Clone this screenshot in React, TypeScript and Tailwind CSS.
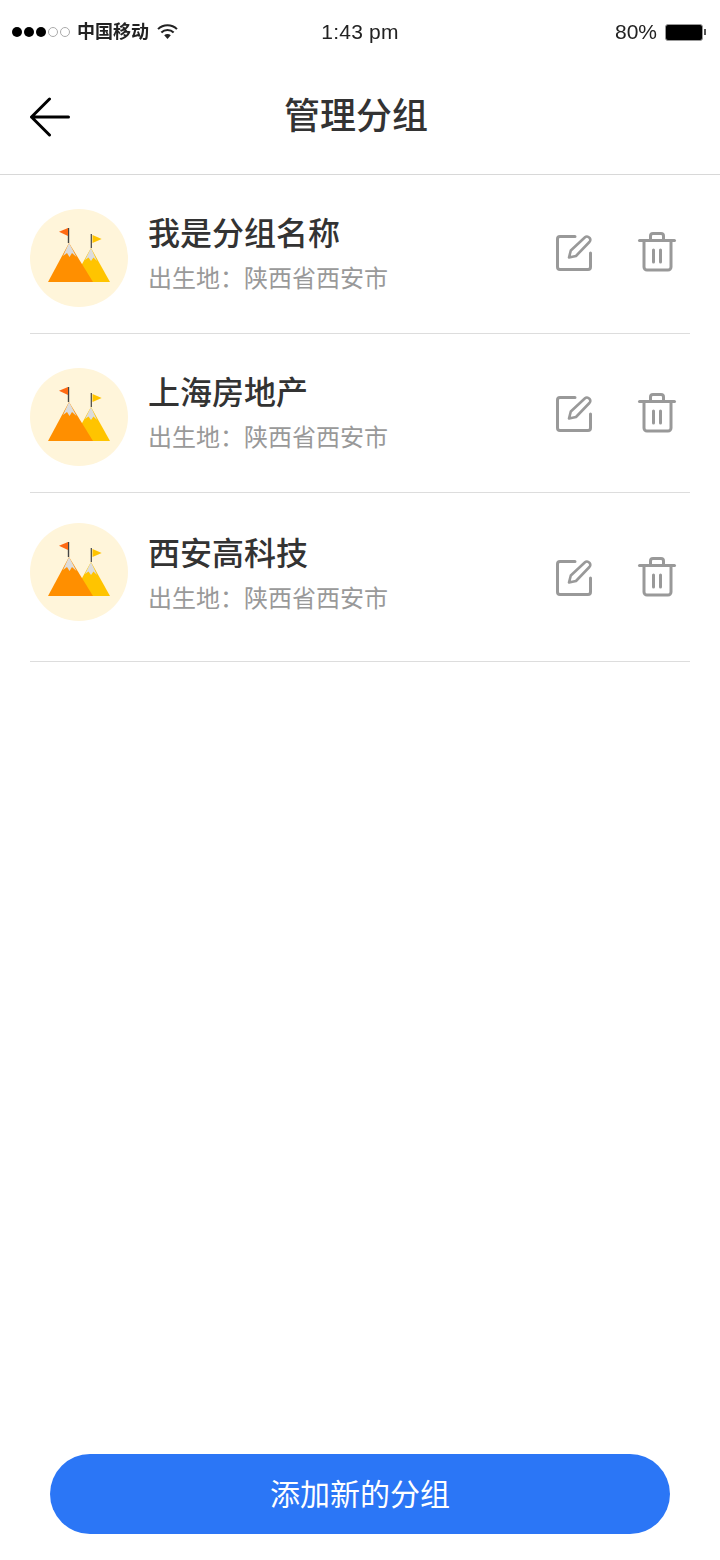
const FONT = "font-['Liberation_Sans','Noto_Sans_CJK_SC',sans-serif]";

function Avatar() {
  return (
    <div className="w-[98px] h-[98px] rounded-full bg-[#fff5da] shrink-0">
      <svg width="98" height="98" viewBox="0 0 98 98">
        <path d="M61 39L80 73H42Z" fill="#ffc400" />
        <path d="M61 39L55 51L58.5 48.5L61 52L63.5 48.5L67 52Z" fill="#dcdcdc" />
        <path d="M39 34L63 73H18Z" fill="#ff8f00" />
        <path d="M39 34L33 47L37 44L39.5 48L42 44L46.5 48Z" fill="#dcdcdc" />
        <path d="M38.5 19V34" stroke="#444" strokeWidth="1.4" />
        <path d="M38 19V27L29 22.7Z" fill="#ff6a13" />
        <path d="M61.3 25V39" stroke="#444" strokeWidth="1.2" />
        <path d="M62.5 26L71.7 30L62.5 34Z" fill="#ffc400" />
      </svg>
    </div>
  );
}

function EditIcon() {
  return (
    <svg width="40" height="40" viewBox="0 0 40 40" fill="none" stroke="#999" strokeWidth="3" strokeLinecap="round" strokeLinejoin="round">
      <path d="M20 3.5H5A2.5 2.5 0 0 0 2.5 6V34A2.5 2.5 0 0 0 5 36.5H33A2.5 2.5 0 0 0 35.5 34V20" />
      <path d="M14 24.5L15.8 17.5L30 4.2a2.8 2.8 0 0 1 4 .2l.6.6a2.8 2.8 0 0 1-.2 4L21 23Z" strokeWidth="2.6" />
    </svg>
  );
}

function TrashIcon() {
  return (
    <svg width="42" height="42" viewBox="0 0 42 42" fill="none" stroke="#999" strokeWidth="3" strokeLinecap="round" strokeLinejoin="round">
      <path d="M3.5 9.5H38.5" />
      <path d="M14.5 9V5a2.5 2.5 0 0 1 2.5-2.5h8a2.5 2.5 0 0 1 2.5 2.5V9" />
      <path d="M8 10V36a3 3 0 0 0 3 3H32a3 3 0 0 0 3-3V10" />
      <path d="M17.5 19V31M24.5 19V31" />
    </svg>
  );
}

function BackArrow() {
  return (
    <svg width="40" height="40" viewBox="0 0 40 40" fill="none" stroke="#000" strokeWidth="3" strokeLinecap="round" strokeLinejoin="round">
      <path d="M1.5 20H38.5M19.5 2L1.5 20L19.5 38" />
    </svg>
  );
}

function Wifi() {
  return (
    <svg width="21" height="17" viewBox="0 0 22 18" fill="none" stroke="#222" strokeWidth="2.2">
      <path d="M1 6.5C6.5 1 15.5 1 21 6.5" />
      <path d="M4.5 10C8 6.5 14 6.5 17.5 10" />
      <path d="M11 17L7.5 13C9.5 11.3 12.5 11.3 14.5 13Z" fill="#222" stroke="none" />
    </svg>
  );
}

function StatusBar() {
  return (
    <div className="h-16 grid grid-cols-3 items-center text-[#222] blur-[0.5px]">
      <div className="flex items-center pl-3">
        <div className="flex gap-[2px] w-[59px]">
          {[0, 1, 2].map((i) => (
            <span key={i} className="w-[10px] h-[10px] rounded-full bg-black" />
          ))}
          {[3, 4].map((i) => (
            <span key={i} className="w-[10px] h-[10px] rounded-full border border-[#aaa]" />
          ))}
        </div>
        <span className="ml-[6px] text-[18px] font-bold text-[#222] whitespace-nowrap">中国移动</span>
        <span className="ml-2 flex -mt-[2px]"><Wifi /></span>
      </div>
      <div className="text-center text-[21px] tracking-[0.2px]">1:43 pm</div>
      <div className="flex items-center justify-end pr-[14px]">
        <span className="text-[21px] mr-2">80%</span>
        <span className="w-[38px] h-[17px] rounded-[3px] border border-[#999] bg-black" />
        <span className="w-[2px] h-[6px] bg-[#555] ml-[1px]" />
      </div>
    </div>
  );
}

type RowProps = { title: string; pt: string; pb: string; textMt: string; iconMt: string };

function Row({ title, pt, pb, textMt, iconMt }: RowProps) {
  return (
    <div className={`mx-[30px] flex items-start border-b border-[#ddd] ${pt} ${pb}`}>
      <Avatar />
      <div className={`ml-5 flex-1 ${textMt}`}>
        <div className="text-[32px] leading-10 font-medium text-[#333] whitespace-nowrap">{title}</div>
        <div className="mt-[9px] text-[24px] leading-8 text-[#999] whitespace-nowrap">出生地：陕西省西安市</div>
      </div>
      <div className={`flex items-start gap-[41px] pr-3 ${iconMt}`}>
        <EditIcon />
        <div className="-mt-[2px]"><TrashIcon /></div>
      </div>
    </div>
  );
}

export default function App() {
  return (
    <div className={`w-[720px] h-[1560px] bg-white flex flex-col ${FONT}`}>
      <StatusBar />
      <div className="h-[111px] border-b border-[#d8d8d8] flex items-center pl-[30px] pb-[4px]">
        <BackArrow />
        <h1 className="ml-[214px] text-[36px] font-medium text-[#333] whitespace-nowrap">管理分组</h1>
      </div>
      <Row title="我是分组名称" pt="pt-[34px]" pb="pb-[26px]" textMt="mt-[5px]" iconMt="mt-6" />
      <Row title="上海房地产" pt="pt-[34px]" pb="pb-[26px]" textMt="mt-[5px]" iconMt="mt-[26px]" />
      <Row title="西安高科技" pt="pt-[30px]" pb="pb-10" textMt="mt-[11px]" iconMt="mt-[35px]" />
      <div className="mt-auto mb-[26px] mx-[50px] h-20 rounded-full bg-[#2b76f6] flex items-center justify-center text-[30px] text-white">
        添加新的分组
      </div>
    </div>
  );
}
